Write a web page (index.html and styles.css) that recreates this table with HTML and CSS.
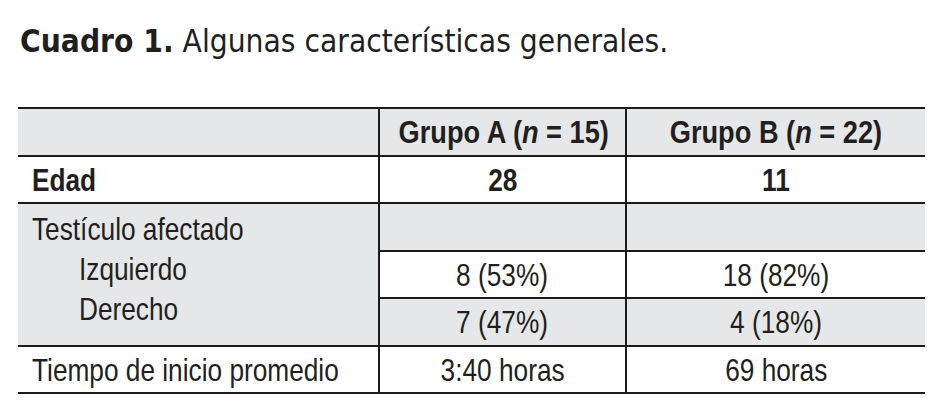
FILE: index.html
```html
<!DOCTYPE html>
<html lang="es">
<head>
<meta charset="utf-8">
<title>Cuadro 1</title>
<link rel="stylesheet" href="styles.css">
</head>
<body>
<div class="page">
  <h1 class="caption"><span class="caption-label">Cuadro 1.</span> Algunas características generales.</h1>
  <table class="data">
    <colgroup>
      <col class="w1">
      <col class="w2">
      <col class="w3">
    </colgroup>
    <tr class="row-head shade">
      <th class="c1"></th>
      <th class="c2"><span class="t">Grupo A (<i>n</i> = 15)</span></th>
      <th class="c3"><span class="t">Grupo B (<i>n</i> = 22)</span></th>
    </tr>
    <tr class="row-a">
      <td class="c1 strong"><span class="t">Edad</span></td>
      <td class="c2 strong"><span class="t">28</span></td>
      <td class="c3 strong"><span class="t">11</span></td>
    </tr>
    <tr class="row-b shade">
      <td class="c1 stack" rowspan="3">
        <div class="line"><span class="t">Testículo afectado</span></div>
        <div class="line sub"><span class="t">Izquierdo</span></div>
        <div class="line sub"><span class="t">Derecho</span></div>
      </td>
      <td class="c2"></td>
      <td class="c3"></td>
    </tr>
    <tr class="row-c">
      <td class="c2"><span class="t">8 (53%)</span></td>
      <td class="c3"><span class="t">18 (82%)</span></td>
    </tr>
    <tr class="row-b shade">
      <td class="c2"><span class="t">7 (47%)</span></td>
      <td class="c3"><span class="t">4 (18%)</span></td>
    </tr>
    <tr class="row-a">
      <td class="c1"><span class="t">Tiempo de inicio promedio</span></td>
      <td class="c2"><span class="t">3:40 horas</span></td>
      <td class="c3"><span class="t">69 horas</span></td>
    </tr>
  </table>
</div>
</body>
</html>
```

FILE: styles.css
```css
html, body {
  margin: 0;
  padding: 0;
  background: #ffffff;
}
.page {
  padding: 23px 25px 0 18px;
}
.caption {
  margin: 0 0 0 2px;
  font-family: "DejaVu Sans Condensed", "DejaVu Sans", sans-serif;
  font-weight: normal;
  font-size: 31.4px;
  line-height: 36px;
  color: #1f1f1f;
  white-space: nowrap;
}
.caption-label {
  font-weight: bold;
}
.data {
  margin-top: 48px;
  width: 907px;
  table-layout: fixed;
  border-collapse: collapse;
  font-family: "Liberation Sans", Arial, sans-serif;
  font-size: 32px;
  color: #231f20;
}
.w1 { width: 361px; }
.w2 { width: 247px; }
.w3 { width: 299px; }
.data th, .data td {
  padding: 0 14px;
  border-top: 2px solid #1c1a1a;
  border-bottom: 2px solid #1c1a1a;
  vertical-align: middle;
  line-height: 36px;
  white-space: nowrap;
  overflow: visible;
}
.data th {
  font-weight: bold;
  text-align: center;
}
.data i {
  font-style: italic;
}
.t {
  display: inline-block;
  transform: scaleX(0.82);
}
.data th .t {
  transform: scaleX(0.85);
}
.data .c1 {
  text-align: left;
}
.c1 .t {
  transform-origin: left center;
}
.data .c2,
.data .c3 {
  padding: 0;
  text-align: center;
  border-left: 2px solid #1c1a1a;
}
.c2 .t, .c3 .t {
  transform-origin: center center;
}
.row-head th { height: 46px; }
.row-a td { height: 45px; }
.row-b td { height: 46px; }
.row-c td { height: 45px; }
.shade th, .shade td {
  background: #e6e7e8;
}
.data .strong {
  font-weight: bold;
}
.data .stack {
  vertical-align: top;
  padding-top: 5px;
  background: #e6e7e8;
}
.stack .line {
  line-height: 40px;
}
.stack .sub {
  padding-left: 47px;
}
```
